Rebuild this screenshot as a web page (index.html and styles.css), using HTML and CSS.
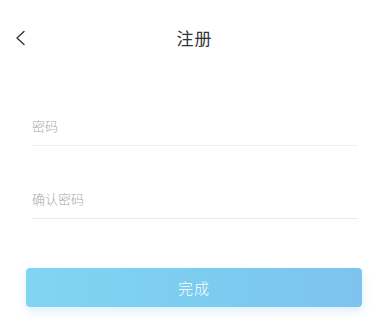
FILE: index.html
```html
<!DOCTYPE html>
<html lang="zh-CN">
<head>
<meta charset="utf-8">
<link rel="stylesheet" href="styles.css">
</head>
<body>
<div class="page">
  <header class="header">
    <span class="back">
      <svg width="12" height="16" viewBox="0 0 12 16"><path d="M10 1.5 L3 8 L10 14.5" fill="none" stroke="#333" stroke-width="1.4" stroke-linecap="round" stroke-linejoin="round"/></svg>
    </span>
    <h1 class="title">注册</h1>
  </header>
  <form class="form">
    <div class="field field-first"><span class="label">密码</span></div>
    <div class="field field-second"><span class="label">确认密码</span></div>
    <button type="button" class="submit">完成</button>
  </form>
</div>
</body>
</html>
```
FILE: styles.css
```css
html, body {
  margin: 0;
  padding: 0;
  background: #fff;
}
body {
  font-family: "Noto Sans CJK SC", "Noto Sans", sans-serif;
  width: 389px;
  height: 331px;
  overflow: hidden;
}
.header {
  position: relative;
  padding-top: 28px;
  height: 20px;
  display: flex;
  justify-content: center;
}
.back {
  position: absolute;
  left: 14px;
  top: 30px;
  width: 12px;
  height: 16px;
}
.back svg { display: block; }
.title {
  margin: 0;
  font-size: 17px;
  font-weight: 400;
  line-height: 20px;
  color: #333;
  letter-spacing: 1px;
}
.form {
  display: flex;
  flex-direction: column;
  padding: 0 31px 0 32px;
  margin-top: 68px;
}
.field {
  padding-bottom: 9px;
  border-bottom: 1px solid #f0f0f0;
}
.field-second {
  margin-top: 43px;
  border-bottom-color: #e9e9e9;
}
.label {
  display: block;
  font-size: 13px;
  line-height: 20px;
  color: #a8a8a8;
  font-weight: 300;
}
.submit {
  margin: 49px -4px 0 -6px;
  height: 39px;
  border: none;
  border-radius: 4px;
  background: linear-gradient(90deg, #81d5f3 0%, #7ccbf0 60%, #7ec3ef 100%);
  color: #fff;
  font-family: inherit;
  font-size: 15px;
  font-weight: 300;
  letter-spacing: 1px;
  box-shadow: 0 4px 8px rgba(120, 190, 235, 0.25);
}
```
